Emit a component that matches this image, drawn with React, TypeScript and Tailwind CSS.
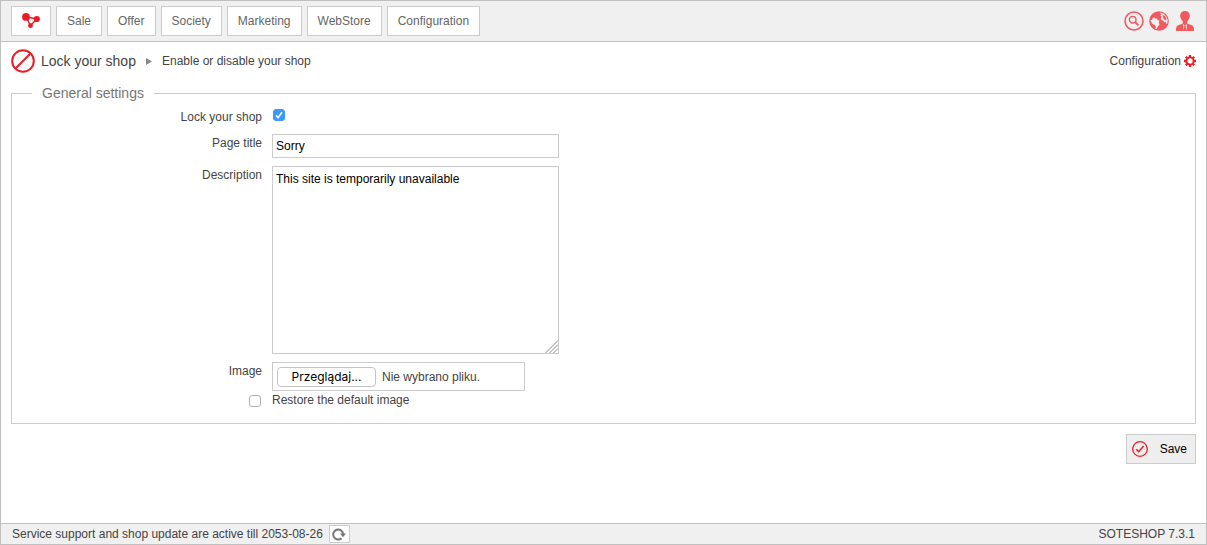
import { useState, type ReactNode } from 'react';

const menuItems = [
  'Sale',
  'Offer',
  'Society',
  'Marketing',
  'WebStore',
  'Configuration',
];

const LogoIcon = () => (
  <svg width="18" height="16" viewBox="0 0 18 16" aria-hidden="true">
    <path
      d="M4 3.8L14.8 6L8.5 12.5Z"
      fill="none"
      stroke="#ed1c24"
      strokeWidth="1.4"
    />
    <circle cx="4" cy="3.9" r="3.9" fill="#ed1c24" />
    <circle cx="14.8" cy="6" r="3.1" fill="#ed1c24" />
    <circle cx="8.5" cy="12.7" r="2.4" fill="#ed1c24" />
  </svg>
);

const SearchIcon = () => (
  <svg width="20" height="20" viewBox="0 0 20 20" fill="none" stroke="#f0595e" aria-hidden="true">
    <circle cx="10" cy="10" r="9" strokeWidth="1.5" />
    <circle cx="8.7" cy="8.7" r="3.3" strokeWidth="1.4" />
    <path d="M11.2 11.2L14.4 14.4" strokeWidth="1.9" />
  </svg>
);

const GlobeIcon = () => (
  <svg width="20" height="20" viewBox="0 0 20 20" aria-hidden="true">
    <circle cx="10" cy="10" r="9.8" fill="#f0595e" />
    <path
      d="M1.4 9.2L3.2 8.8L3.8 6.8L5.6 6.4L6.2 7.8L8 7.4L8.6 9L10.4 9.6L9.8 11.4L10.6 13.4L9 15.2L7.8 17.8L6.4 18L6.8 15.4L5.2 13.6L3.6 13.2L2.4 11.2Z"
      fill="#f0f0f0"
    />
    <path
      d="M10.8 1.4L14.4 2.4L17.2 5.2L18.6 8.6L18.4 12.2L17.2 13L16.6 10.6L15 11.4L14.2 9.2L12.6 9.4L11.8 7.2L13 5.8L11.4 4.8L12.2 3.2Z"
      fill="#f0f0f0"
    />
    <path d="M13.6 4.2L15.6 4.6L17.4 7.6L16.8 9.4L15.2 8.4L14.2 6.8Z" fill="#f0595e" />
  </svg>
);

const UserIcon = () => (
  <svg width="20" height="20" viewBox="0 0 20 20" aria-hidden="true">
    <path
      d="M10 0C13 0 14.8 2 14.8 4.8C14.8 7.4 13.4 9 12.2 10.4V12.6L17.4 14.6C18.8 15.4 19 17 19 20H1C1 17 1.2 15.4 2.6 14.6L7.8 12.6V10.4C6.6 9 5.2 7.4 5.2 4.8C5.2 2 7 0 10 0Z"
      fill="#f0595e"
    />
    <path d="M8 13L10 14.4L12 13L11.4 19H8.6Z" fill="#f0f0f0" />
    <path d="M9.4 14.2H10.6L11.1 18.4L10 19.4L8.9 18.4Z" fill="#f0595e" />
  </svg>
);

const GearIcon = () => (
  <svg width="12" height="12" viewBox="0 0 12 12" fill="none" stroke="#ed1c24" aria-hidden="true">
    <circle cx="6" cy="6" r="3.6" strokeWidth="1.9" />
    <path
      d="M6 0V2M6 10V12M0 6H2M10 6H12M1.8 1.8L3.2 3.2M8.8 8.8L10.2 10.2M10.2 1.8L8.8 3.2M3.2 8.8L1.8 10.2"
      strokeWidth="2.3"
    />
  </svg>
);

const LockIcon = () => (
  <svg width="24" height="24" viewBox="0 0 24 24" fill="none" stroke="#ed1c24" strokeWidth="2" aria-hidden="true">
    <circle cx="12" cy="12" r="10.8" />
    <path d="M4.8 19.2L19.2 4.8" />
  </svg>
);

const SaveIcon = () => (
  <svg width="16" height="16" viewBox="0 0 16 16" fill="none" stroke="#ed1c24" aria-hidden="true">
    <circle cx="8" cy="8" r="7.3" strokeWidth="1.3" />
    <path d="M4.4 8.4L6.7 10.7L11.6 5" strokeWidth="1.5" />
  </svg>
);

const RefreshIcon = () => (
  <svg width="14" height="14" viewBox="0 0 14 14" aria-hidden="true">
    <path d="M9.6 11.2A5 5 0 1 1 11.2 7" fill="none" stroke="#777" strokeWidth="2" />
    <path d="M8 6.6H14L11 10.2Z" fill="#777" />
  </svg>
);

const checkboxStyle =
  'appearance-none block h-3 w-3 rounded-[3px] border border-[#b0b0b0] bg-white checked:border-[#3b99fc] checked:bg-[#3b99fc]';

const FormRow = ({
  label,
  htmlFor,
  children,
}: {
  label: string;
  htmlFor: string;
  children: ReactNode;
}) => (
  <div className="flex items-start gap-2.5">
    <label htmlFor={htmlFor} className="w-[250px] shrink-0 text-right leading-[18px]">
      {label}
    </label>
    {children}
  </div>
);

const App = () => {
  const [locked, setLocked] = useState(true);
  const [fileName, setFileName] = useState('Nie wybrano pliku.');

  return (
    <div className="flex min-h-screen flex-col border border-[#c0c0c0] bg-white font-['Liberation_Sans',Arial,sans-serif] text-xs text-[#444]">
      <header className="flex items-center justify-between border-b border-[#c0c0c0] bg-[#f0f0f0] pr-[11px] pl-2.5 py-[5px]">
        <nav className="flex gap-[5px]">
          <a
            href="#"
            aria-label="Dashboard"
            className="flex h-[30px] w-10 items-center justify-center border border-[#ccc] bg-white"
          >
            <LogoIcon />
          </a>
          {menuItems.map((item) => (
            <a
              key={item}
              href="#"
              className="flex h-[30px] items-center border border-[#ccc] bg-white px-2.5 text-[#666]"
            >
              {item}
            </a>
          ))}
        </nav>
        <div className="flex gap-[5px]">
          <button type="button" aria-label="Search">
            <SearchIcon />
          </button>
          <button type="button" aria-label="Language">
            <GlobeIcon />
          </button>
          <button type="button" aria-label="Account" className="ml-px">
            <UserIcon />
          </button>
        </div>
      </header>

      <main className="px-2.5 pt-[7px] pb-5">
        <div className="flex h-6 items-center justify-between">
          <div className="flex items-center">
            <LockIcon />
            <h1 className="ml-1.5 text-sm">Lock your shop</h1>
            <svg width="6" height="8" viewBox="0 0 6 8" className="mx-2.5" aria-hidden="true">
              <path d="M0 1L6 4.5L0 8Z" fill="#888" />
            </svg>
            <span>Enable or disable your shop</span>
          </div>
          <a href="#" className="flex items-center gap-[3px]">
            Configuration
            <GearIcon />
          </a>
        </div>

        <form onSubmit={(e) => e.preventDefault()}>
          <fieldset className="mt-2.5 border border-[#ccc] pb-3.5">
            <legend className="ml-5 px-2.5 text-sm text-[#777]">
              General settings
            </legend>
            <div className="flex flex-col gap-2 pt-[5px]">
              <FormRow label="Lock your shop" htmlFor="lock">
                <span className="relative mt-px ml-px">
                  <input
                    id="lock"
                    type="checkbox"
                    checked={locked}
                    onChange={(e) => setLocked(e.target.checked)}
                    className={checkboxStyle}
                  />
                  {locked && (
                    <svg
                      viewBox="0 0 12 12"
                      className="pointer-events-none absolute inset-0 h-3 w-3"
                      aria-hidden="true"
                    >
                      <path d="M3 6.4L5.1 8.8L9 3.2" fill="none" stroke="#fff" strokeWidth="1.6" />
                    </svg>
                  )}
                </span>
              </FormRow>
              <FormRow label="Page title" htmlFor="title">
                <input
                  id="title"
                  type="text"
                  defaultValue="Sorry"
                  className="h-6 w-[287px] border border-[#ccc] bg-white px-[3px] text-black"
                />
              </FormRow>
              <FormRow label="Description" htmlFor="description">
                <div className="relative">
                  <textarea
                    id="description"
                    defaultValue="This site is temporarily unavailable"
                    className="block h-[188px] w-[287px] resize border border-[#ccc] bg-white px-[3px] py-1 text-black"
                  />
                  {/* resize grip */}
                  <svg
                    width="13"
                    height="13"
                    viewBox="0 0 13 13"
                    className="pointer-events-none absolute right-px bottom-px bg-white"
                    aria-hidden="true"
                  >
                    <path d="M0.5 13L13 0.5M4.5 13L13 4.5M8.5 13L13 8.5" stroke="#888" />
                  </svg>
                </div>
              </FormRow>
              <div>
                <FormRow label="Image" htmlFor="image">
                  <div className="flex h-[29px] w-[253px] items-center gap-1.5 border border-[#ccc] px-1">
                    <input
                      id="image"
                      type="file"
                      className="sr-only"
                      onChange={(e) =>
                        setFileName(e.target.files?.[0]?.name ?? 'Nie wybrano pliku.')
                      }
                    />
                    <label
                      htmlFor="image"
                      className="flex h-5 w-[99px] items-center justify-center rounded border border-[#c4c4c4] bg-white font-['Inter',sans-serif] text-black"
                    >
                      Przeglądaj...
                    </label>
                    <span>{fileName}</span>
                  </div>
                </FormRow>
                <div className="flex items-center gap-[11px]">
                  <span className="flex w-[249px] justify-end pt-0.5">
                    <input id="restore" type="checkbox" className={checkboxStyle} />
                  </span>
                  <label htmlFor="restore" className="leading-[18px]">
                    Restore the default image
                  </label>
                </div>
              </div>
            </div>
          </fieldset>

          <div className="mt-2.5 flex justify-end">
            <button
              type="submit"
              className="flex h-[30px] items-center gap-3 border border-[#ccc] bg-[#eee] pr-2 pl-[5px] text-black"
            >
              <SaveIcon />
              Save
            </button>
          </div>
        </form>
      </main>

      <footer className="mt-auto flex h-[21px] items-center justify-between border-t border-[#c0c0c0] bg-[#f0f0f0] px-[11px]">
        <div className="flex items-center gap-1.5">
          <span>Service support and shop update are active till 2053-08-26</span>
          <button
            type="button"
            aria-label="Refresh"
            className="flex h-[18px] w-[21px] items-center justify-center border border-[#ccc] bg-white"
          >
            <RefreshIcon />
          </button>
        </div>
        <span>SOTESHOP 7.3.1</span>
      </footer>
    </div>
  );
};

export default App;
